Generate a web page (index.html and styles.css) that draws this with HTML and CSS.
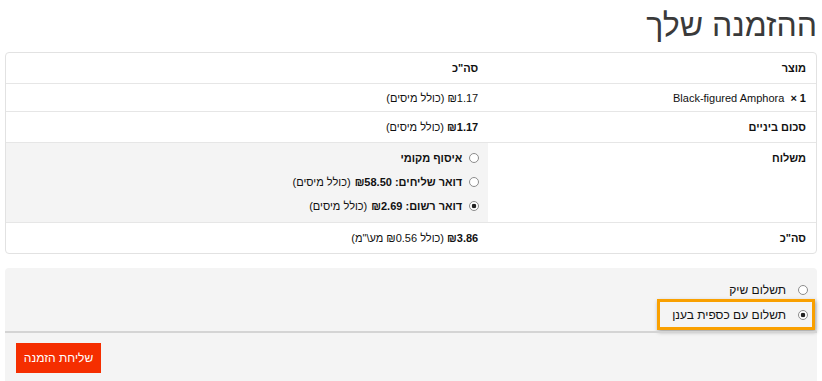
FILE: index.html
```html
<!DOCTYPE html>
<html lang="he" dir="rtl">
<head>
  <meta charset="UTF-8">
  <title>ההזמנה שלך</title>
  <link rel="stylesheet" href="styles.css">
</head>
<body>

  <h3 class="order-title">ההזמנה שלך</h3>

  <table class="order-review">
    <thead>
      <tr>
        <th class="product-name">מוצר</th>
        <th class="product-total">סה"כ</th>
      </tr>
    </thead>
    <tbody>
      <tr>
        <td class="product-name">Black-figured Amphora&nbsp; <strong class="qty">&times; 1</strong></td>
        <td class="product-total"><span class="amount">&#8362;1.17</span> <small>(כולל מיסים)</small></td>
      </tr>
    </tbody>
    <tfoot>
      <tr>
        <th>סכום ביניים</th>
        <td><strong class="amount">&#8362;1.17</strong> <small>(כולל מיסים)</small></td>
      </tr>
      <tr class="shipping">
        <th>משלוח</th>
        <td class="shipping-cell">
          <ul class="shipping-methods">
            <li><input type="radio" name="ship"> <label>איסוף מקומי</label></li>
            <li><input type="radio" name="ship"> <label>דואר שליחים: <span class="amount">&#8362;58.50</span></label> <small>(כולל מיסים)</small></li>
            <li><input type="radio" name="ship" checked> <label>דואר רשום: <span class="amount">&#8362;2.69</span></label> <small>(כולל מיסים)</small></li>
          </ul>
        </td>
      </tr>
      <tr>
        <th>סה"כ</th>
        <td><strong class="amount">&#8362;3.86</strong> <small>(כולל &#8362;0.56 מע&#92;"מ)</small></td>
      </tr>
    </tfoot>
  </table>

  <div class="payment">
    <ul class="payment-methods">
      <li><input type="radio" name="pay"> <label>תשלום שיק</label></li>
      <li class="highlight"><input type="radio" name="pay" checked> <label>תשלום עם כספית בענן</label></li>
    </ul>
    <div class="place-order">
      <button type="button" class="submit-btn">שליחת הזמנה</button>
    </div>
  </div>

</body>
</html>
```

FILE: styles.css
```css
body {
  margin: 0;
  padding: 0 5px;
  font-family: "Liberation Sans", "DejaVu Sans", sans-serif;
  font-size: 11px;
  color: #111;
  background-color: #fff;
}

.order-title {
  margin: 0;
  padding: 7px 0 0 0;
  height: 44px;
  box-sizing: border-box;
  font-size: 32px;
  font-weight: normal;
  color: #3a3a3a;
  line-height: 36px;
}

.order-review {
  width: 100%;
  table-layout: fixed;
  border: 1px solid #e2e2e2;
  border-radius: 4px;
  border-collapse: separate;
  border-spacing: 0;
  margin-top: 8px;
}

.order-review th,
.order-review td {
  text-align: right;
  padding: 0 10px;
  border-top: 1px solid #e6e6e6;
  vertical-align: middle;
  height: 30px;
}

.order-review thead th {
  border-top: none;
}

.order-review th.product-name {
  width: 38%;
}

.order-review th {
  font-weight: bold;
}

.order-review tbody td {
  height: 27px;
}

.order-review small {
  font-size: 11px;
}

.shipping th {
  vertical-align: top;
  padding-top: 9px;
}

.shipping-cell {
  background-color: #f4f4f4;
  padding: 0 !important;
}

.shipping-methods,
.payment-methods {
  list-style: none;
  margin: 0;
  padding: 0;
}

.shipping-methods {
  padding: 3px 9px 4px 0;
}

.shipping-methods li {
  height: 24px;
  display: flex;
  align-items: center;
  gap: 4px;
}

.shipping-methods label {
  font-weight: bold;
}

input[type="radio"] {
  appearance: none;
  width: 10px;
  height: 10px;
  margin: 0 0 0 3px;
  border: 1px solid #8c8c8c;
  border-radius: 50%;
  background-color: #fff;
  box-sizing: border-box;
  flex-shrink: 0;
}

input[type="radio"]:checked {
  background: radial-gradient(circle, #222 0 2px, #fff 2.6px);
}

.payment {
  margin-top: 14px;
  background-color: #f4f4f4;
  border-radius: 4px 4px 0 0;
}

.payment-methods {
  padding: 13px 9px 0 0;
}

.payment-methods li {
  height: 18px;
  display: flex;
  align-items: center;
  gap: 9px;
  font-size: 12px;
  color: #111;
}

.payment-methods .highlight {
  width: 148px;
  margin-right: -7px;
  padding-right: 4px;
  height: 25px;
  border: 3px solid #f9a000;
  box-shadow: 1px 2px 4px rgba(0, 0, 0, 0.35);
}

.place-order {
  border-top: 2px solid #d4d4d4;
  padding: 10px 11px 8px;
  margin-top: 1px;
  text-align: left;
}

.submit-btn {
  background-color: #f52e00;
  color: #fff;
  border: none;
  font-family: inherit;
  font-size: 12px;
  height: 30px;
  width: 85px;
  padding: 0;
}
```
